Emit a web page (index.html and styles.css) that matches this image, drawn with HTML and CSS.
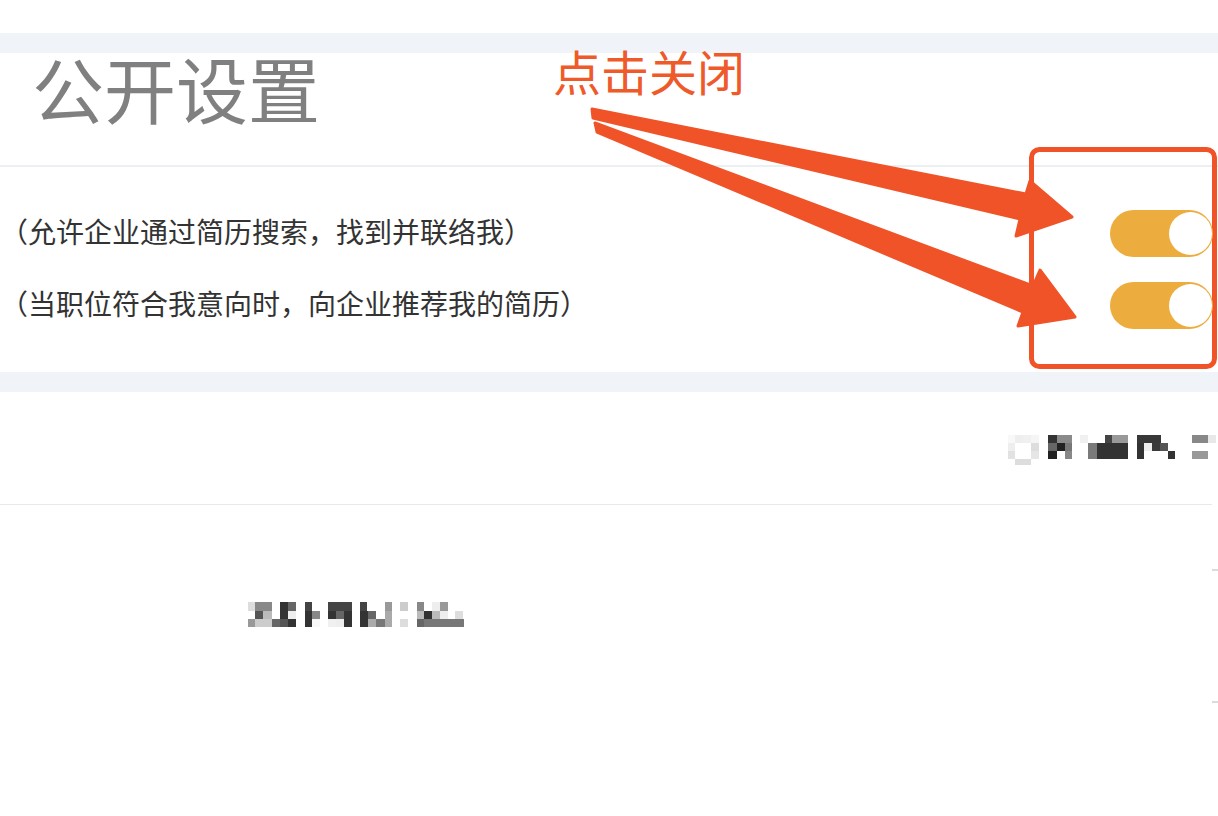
FILE: index.html
```html
<!DOCTYPE html>
<html>
<head>
    <link rel="stylesheet" href="styles.css">
</head>
<body>
    <div class="page">
        <div class="top-space"></div>
        <div class="band"></div>

        <section class="panel">
            <h2 class="panel-title">公开设置</h2>
            <div class="switch-list">
                <div class="switch-row">
                    <span class="switch-label">（允许企业通过简历搜索，找到并联络我）</span>
                    <span class="toggle on"><span class="knob"></span></span>
                </div>
                <div class="switch-row">
                    <span class="switch-label">（当职位符合我意向时，向企业推荐我的简历）</span>
                    <span class="toggle on"><span class="knob"></span></span>
                </div>
            </div>
        </section>

        <div class="band"></div>

        <section class="panel info">
            <div class="info-row first">
                <!-- pixelated (blurred) value -->
                <svg class="mosaic mosaic-right" width="210" height="32" viewBox="0 0 210 32">
                    <rect x="0" y="2" width="7" height="8" fill="#f8f8f8"/>
                    <rect x="7" y="2" width="8" height="8" fill="#eeeeee"/>
                    <rect x="15" y="2" width="8" height="8" fill="#f0f0f0"/>
                    <rect x="23" y="2" width="8" height="8" fill="#f5f5f5"/>
                    <rect x="0" y="10" width="7" height="8" fill="#eeeeee"/>
                    <rect x="23" y="10" width="8" height="8" fill="#dddddd"/>
                    <rect x="0" y="18" width="7" height="8" fill="#e2e2e2"/>
                    <rect x="23" y="18" width="8" height="8" fill="#e6e6e6"/>
                    <rect x="7" y="26" width="16" height="6" fill="#dddddd"/>

                    <rect x="40" y="2" width="9" height="8" fill="#333333"/>
                    <rect x="49" y="2" width="15" height="8" fill="#8a8a8a"/>
                    <rect x="40" y="10" width="9" height="8" fill="#666666"/>
                    <rect x="49" y="10" width="8" height="8" fill="#222222"/>
                    <rect x="57" y="10" width="7" height="8" fill="#777777"/>
                    <rect x="40" y="18" width="9" height="8" fill="#222222"/>
                    <rect x="57" y="18" width="7" height="8" fill="#888888"/>

                    <rect x="72" y="2" width="8" height="8" fill="#f0f0f0"/>
                    <rect x="97" y="2" width="7" height="8" fill="#444444"/>
                    <rect x="104" y="2" width="16" height="8" fill="#999999"/>
                    <rect x="80" y="10" width="9" height="16" fill="#7a7a7a"/>
                    <rect x="89" y="10" width="31" height="16" fill="#333333"/>

                    <rect x="129" y="2" width="24" height="8" fill="#383838"/>
                    <rect x="129" y="10" width="7" height="16" fill="#333333"/>
                    <rect x="136" y="10" width="8" height="8" fill="#eeeeee"/>
                    <rect x="144" y="10" width="8" height="8" fill="#3a3a3a"/>
                    <rect x="152" y="10" width="8" height="8" fill="#555555"/>
                    <rect x="160" y="18" width="7" height="8" fill="#333333"/>

                    <rect x="184" y="2" width="16" height="8" fill="#888888"/>
                    <rect x="200" y="2" width="8" height="8" fill="#e8e8e8"/>
                    <rect x="184" y="18" width="16" height="8" fill="#999999"/>
                </svg>
            </div>
            <div class="info-row second">
                <svg class="mosaic mosaic-left" width="220" height="26" viewBox="0 0 220 26">
                    <rect x="0" y="0" width="7" height="9" fill="#dddddd"/>
                    <rect x="7" y="0" width="17" height="9" fill="#888888"/>
                    <rect x="32" y="0" width="8" height="9" fill="#333333"/>
                    <rect x="40" y="0" width="8" height="9" fill="#666666"/>
                    <rect x="57" y="0" width="7" height="9" fill="#444444"/>
                    <rect x="80" y="0" width="24" height="9" fill="#444444"/>
                    <rect x="112" y="0" width="7" height="9" fill="#444444"/>
                    <rect x="137" y="0" width="7" height="9" fill="#999999"/>
                    <rect x="152" y="0" width="8" height="9" fill="#cccccc"/>
                    <rect x="169" y="0" width="7" height="9" fill="#888888"/>
                    <rect x="184" y="0" width="8" height="9" fill="#eeeeee"/>
                    <rect x="192" y="0" width="8" height="9" fill="#999999"/>

                    <rect x="7" y="9" width="8" height="8" fill="#555555"/>
                    <rect x="15" y="9" width="9" height="8" fill="#bbbbbb"/>
                    <rect x="32" y="9" width="8" height="8" fill="#333333"/>
                    <rect x="40" y="9" width="8" height="8" fill="#eeeeee"/>
                    <rect x="57" y="9" width="7" height="8" fill="#333333"/>
                    <rect x="64" y="9" width="8" height="8" fill="#888888"/>
                    <rect x="80" y="9" width="8" height="8" fill="#333333"/>
                    <rect x="88" y="9" width="8" height="8" fill="#666666"/>
                    <rect x="96" y="9" width="8" height="8" fill="#333333"/>
                    <rect x="112" y="9" width="8" height="8" fill="#333333"/>
                    <rect x="120" y="9" width="8" height="8" fill="#666666"/>
                    <rect x="137" y="9" width="7" height="8" fill="#aaaaaa"/>
                    <rect x="169" y="9" width="7" height="8" fill="#bbbbbb"/>
                    <rect x="176" y="9" width="8" height="8" fill="#333333"/>
                    <rect x="184" y="9" width="8" height="8" fill="#bbbbbb"/>
                    <rect x="192" y="9" width="8" height="8" fill="#eeeeee"/>
                    <rect x="207" y="9" width="8" height="8" fill="#dddddd"/>

                    <rect x="0" y="17" width="7" height="8" fill="#999999"/>
                    <rect x="7" y="17" width="17" height="8" fill="#cccccc"/>
                    <rect x="24" y="17" width="8" height="8" fill="#666666"/>
                    <rect x="32" y="17" width="8" height="8" fill="#555555"/>
                    <rect x="40" y="17" width="8" height="8" fill="#333333"/>
                    <rect x="57" y="17" width="7" height="8" fill="#333333"/>
                    <rect x="64" y="17" width="8" height="8" fill="#f8f8f8"/>
                    <rect x="80" y="17" width="8" height="8" fill="#f0f0f0"/>
                    <rect x="88" y="17" width="8" height="8" fill="#eeeeee"/>
                    <rect x="96" y="17" width="8" height="8" fill="#333333"/>
                    <rect x="112" y="17" width="8" height="8" fill="#333333"/>
                    <rect x="120" y="17" width="8" height="8" fill="#aaaaaa"/>
                    <rect x="128" y="17" width="9" height="8" fill="#777777"/>
                    <rect x="137" y="17" width="7" height="8" fill="#aaaaaa"/>
                    <rect x="152" y="17" width="8" height="8" fill="#dddddd"/>
                    <rect x="169" y="17" width="7" height="8" fill="#666666"/>
                    <rect x="176" y="17" width="40" height="8" fill="#777777"/>
                </svg>
                <div class="ticks">
                    <span class="tick"></span>
                    <span class="tick"></span>
                </div>
            </div>
        </section>

        <!-- annotation layer -->
        <div class="note-label">点击关闭</div>
        <svg class="note-layer" width="1218" height="816" viewBox="0 0 1218 816">
            <g fill="#ef5327" stroke="#ef5327" stroke-width="3" stroke-linejoin="round">
                <polygon points="592,109 1026,194 1030,181 1072,217 1016,236 1020,219 593,118"/>
                <polygon points="595,123 1033,286 1040,270 1075,317 1018,326 1023,312 597,132"/>
            </g>
            <rect x="1031.5" y="149.5" width="183" height="217" rx="8" fill="none" stroke="#ef5327" stroke-width="5"/>
        </svg>
    </div>
</body>
</html>
```

FILE: styles.css
```css
body {
    margin: 0;
    background: #fff;
    font-family: "Noto Sans CJK SC", "Noto Sans", sans-serif;
}
.page {
    position: relative;
    width: 1218px;
    height: 816px;
    overflow: hidden;
    background: #fff;
}
.top-space {
    height: 33px;
}
.band {
    height: 20px;
    background: #f0f3f8;
}
.panel {
    background: #fff;
}
.panel-title {
    margin: 0;
    padding: 0 0 44px 32px;
    font-size: 72px;
    line-height: 68px;
    font-weight: 400;
    color: #808080;
    border-bottom: 2px solid #eceff3;
}
.switch-list {
    padding: 30px 0 31px;
}
.switch-row {
    height: 72px;
    display: flex;
    align-items: center;
    justify-content: space-between;
}
.switch-label {
    margin-bottom: 4px;
    font-size: 28px;
    color: #333;
}
.toggle {
    position: relative;
    z-index: 2;
    width: 103px;
    height: 47px;
    margin-right: 5px;
    box-sizing: border-box;
    padding: 0 1px;
    border-radius: 24px;
    background: #ecad3e;
    display: flex;
    align-items: center;
    justify-content: flex-end;
}
.knob {
    width: 43px;
    height: 43px;
    border-radius: 50%;
    background: #fff;
}
.info-row.first {
    height: 112px;
    margin-right: 6px;
    border-bottom: 1px solid #e6e9ed;
    display: flex;
    align-items: center;
    justify-content: flex-end;
}
.mosaic {
    display: block;
}
.mosaic-right {
    margin-right: -6px;
    margin-top: 2px;
}
.info-row.second {
    height: 310px;
    display: flex;
    justify-content: space-between;
}
.mosaic-left {
    margin: 97px 0 0 248px;
}
.ticks {
    width: 6px;
    display: flex;
    flex-direction: column;
}
.tick {
    display: block;
    height: 2px;
    background: #dcdcdc;
    margin-top: 64px;
}
.tick + .tick {
    margin-top: 130px;
}
.note-layer {
    position: absolute;
    left: 0;
    top: 0;
    z-index: 1;
    pointer-events: none;
}
.note-label {
    position: absolute;
    left: 553px;
    top: 46px;
    z-index: 1;
    font-size: 48px;
    line-height: 48px;
    color: #ef5a2a;
}
```
